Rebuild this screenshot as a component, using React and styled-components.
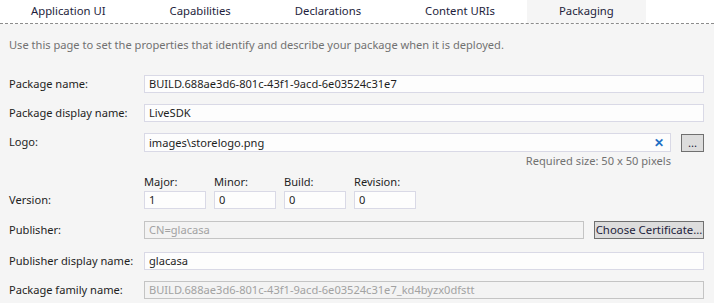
import styled, { createGlobalStyle } from 'styled-components'

const GlobalStyle = createGlobalStyle`
  html, body {
    margin: 0;
    padding: 0;
    background: #f5f5f5;
  }
  body {
    font-family: "Noto Sans", "Open Sans", sans-serif;
    font-size: 11.1px;
    color: #1e1e1e;
  }
`

const Page = styled.div`
  width: 714px;
  height: 303px;
  overflow: hidden;
  background: #f5f5f5;
`

const TabBar = styled.div`
  display: flex;
  height: 23px;
  background: #ffffff;
  border-bottom: 1px dashed #8c8c8c;
`

const Tab = styled.div`
  padding: 0 32px 0 ${({ first }) => (first ? '31px' : '32px')};
  line-height: 22px;
  height: 23px;
  font-size: 11.3px;
  color: #1e1e3c;
  background: ${({ active }) => (active ? '#f5f5f5' : 'transparent')};
`

const Content = styled.div`
  padding: 12px 10px 0 9px;
`

const Intro = styled.p`
  margin: 0 0 21px;
  line-height: 18px;
  color: #717171;
`

const Row = styled.div`
  display: grid;
  grid-template-columns: 135px 1fr;
  align-items: ${({ top }) => (top ? 'start' : 'center')};
  margin-bottom: ${({ gap }) => gap ?? 11}px;
`

const Label = styled.label`
  line-height: 18px;
  padding-top: ${({ offset }) => offset || 0}px;
`

const Input = styled.div`
  box-sizing: border-box;
  height: ${({ tall }) => (tall ? 19 : 18)}px;
  border: 1px solid ${({ disabled }) => (disabled ? '#c4c4c4' : '#d9d9e6')};
  background: ${({ disabled }) => (disabled ? '#f3f3f3' : '#fdfdfd')};
  color: ${({ disabled }) => (disabled ? '#a2a2a2' : '#1e1e1e')};
  padding: 0 4px;
  line-height: 16px;
  white-space: nowrap;
  overflow: hidden;
  display: flex;
  align-items: center;
  flex: ${({ grow }) => (grow ? 1 : 'none')};
`

const Line = styled.div`
  display: flex;
  align-items: center;
  gap: 10px;
`

const Text = styled.span`
  flex: 1;
`

const Clear = styled.span`
  color: #1c6fc4;
  font-size: 12px;
  font-weight: bold;
  margin-right: 2px;
  line-height: 16px;
`

const Button = styled.button`
  box-sizing: border-box;
  height: 18px;
  width: ${({ w }) => w}px;
  border: 1px solid #707070;
  background: #dddddd;
  font-family: inherit;
  font-size: 11.4px;
  color: #1e1e3c;
  padding: 0;
  line-height: 16px;
  white-space: nowrap;
  flex: none;
`

const Hint = styled.div`
  text-align: right;
  padding-right: 33px;
  color: #717171;
  line-height: 16px;
  margin-top: 1px;
`

const VersionGrid = styled.div`
  display: grid;
  grid-template-columns: repeat(4, 62px);
  column-gap: 8px;
`

const VersionPart = styled.div`
  display: flex;
  flex-direction: column;
`

const SubLabel = styled.span`
  line-height: 14px;
  margin-bottom: 2px;
`

const tabs = ['Application UI', 'Capabilities', 'Declarations', 'Content URIs', 'Packaging']
const version = [
  ['Major:', '1'],
  ['Minor:', '0'],
  ['Build:', '0'],
  ['Revision:', '0'],
]

export default function App() {
  return (
    <Page>
      <GlobalStyle />
      <TabBar>
        {tabs.map((tab, i) => (
          <Tab key={tab} first={i === 0} active={tab === 'Packaging'}>
            {tab}
          </Tab>
        ))}
      </TabBar>
      <Content>
        <Intro>
          Use this page to set the properties that identify and describe your package when it is deployed.
        </Intro>
        <Row>
          <Label>Package name:</Label>
          <Input>BUILD.688ae3d6-801c-43f1-9acd-6e03524c31e7</Input>
        </Row>
        <Row>
          <Label>Package display name:</Label>
          <Input>LiveSDK</Input>
        </Row>
        <Row top gap={6}>
          <Label>Logo:</Label>
          <div>
            <Line>
              <Input tall grow>
                <Text>images\storelogo.png</Text>
                <Clear>✕</Clear>
              </Input>
              <Button w={23}>...</Button>
            </Line>
            <Hint>Required size: 50 x 50 pixels</Hint>
          </div>
        </Row>
        <Row top gap={12}>
          <Label offset={16}>Version:</Label>
          <VersionGrid>
            {version.map(([name, value]) => (
              <VersionPart key={name}>
                <SubLabel>{name}</SubLabel>
                <Input>{value}</Input>
              </VersionPart>
            ))}
          </VersionGrid>
        </Row>
        <Row gap={13}>
          <Label>Publisher:</Label>
          <Line>
            <Input disabled grow>CN=glacasa</Input>
            <Button w={110}>Choose Certificate...</Button>
          </Line>
        </Row>
        <Row>
          <Label>Publisher display name:</Label>
          <Input>glacasa</Input>
        </Row>
        <Row>
          <Label>Package family name:</Label>
          <Input disabled>BUILD.688ae3d6-801c-43f1-9acd-6e03524c31e7_kd4byzx0dfstt</Input>
        </Row>
      </Content>
    </Page>
  )
}
